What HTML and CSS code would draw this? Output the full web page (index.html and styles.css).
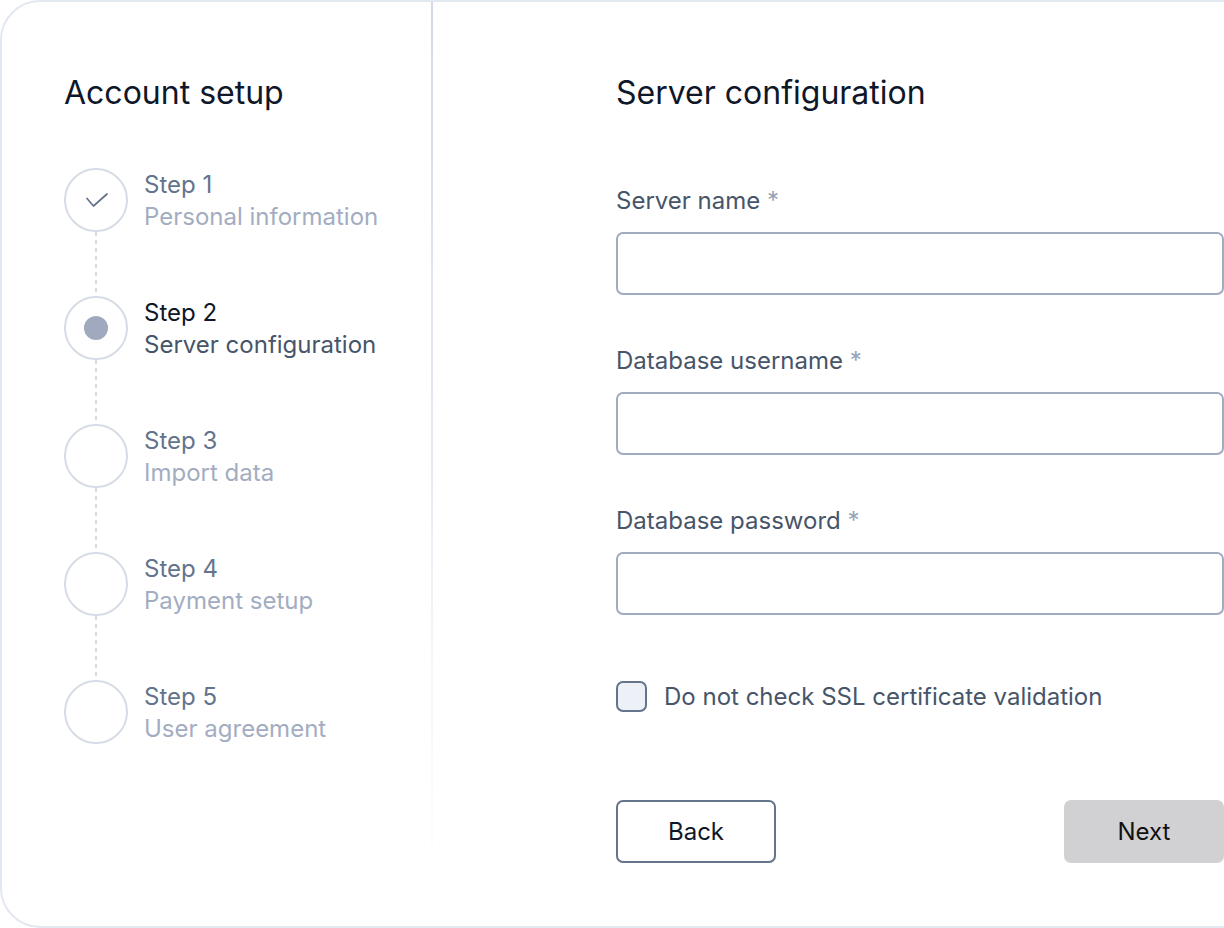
FILE: index.html
```html
<!DOCTYPE html>
<html lang="en">
<head>
<meta charset="utf-8">
<title>Account setup</title>
<link rel="stylesheet" href="styles.css">
</head>
<body>
<div class="card">
  <aside class="sidebar">
    <h1 class="title">Account setup</h1>
    <ol class="steps">
      <li class="step step-done">
        <span class="indicator">
          <svg class="check" width="24" height="24" viewBox="0 0 24 24" aria-hidden="true"><polyline points="2,11.5 8.5,19 22,7" fill="none" stroke="#64748b" stroke-width="1.7" stroke-linecap="round" stroke-linejoin="round"/></svg>
        </span>
        <span class="step-text"><span class="step-num">Step 1</span><span class="step-name">Personal information</span></span>
      </li>
      <li class="connector"><span class="dash"></span></li>
      <li class="step step-active">
        <span class="indicator"><span class="dot"></span></span>
        <span class="step-text"><span class="step-num">Step 2</span><span class="step-name">Server configuration</span></span>
      </li>
      <li class="connector"><span class="dash"></span></li>
      <li class="step">
        <span class="indicator"></span>
        <span class="step-text"><span class="step-num">Step 3</span><span class="step-name">Import data</span></span>
      </li>
      <li class="connector"><span class="dash"></span></li>
      <li class="step">
        <span class="indicator"></span>
        <span class="step-text"><span class="step-num">Step 4</span><span class="step-name">Payment setup</span></span>
      </li>
      <li class="connector"><span class="dash"></span></li>
      <li class="step">
        <span class="indicator"></span>
        <span class="step-text"><span class="step-num">Step 5</span><span class="step-name">User agreement</span></span>
      </li>
    </ol>
  </aside>
  <div class="divider"></div>
  <main class="content">
    <h2 class="title">Server configuration</h2>
    <form class="form">
      <label class="field">
        <span class="label">Server name <span class="req">*</span></span>
        <input class="input" type="text">
      </label>
      <label class="field">
        <span class="label">Database username <span class="req">*</span></span>
        <input class="input" type="text">
      </label>
      <label class="field">
        <span class="label">Database password <span class="req">*</span></span>
        <input class="input" type="password">
      </label>
      <label class="checkbox-row">
        <span class="checkbox"></span>
        <span class="checkbox-label">Do not check SSL certificate validation</span>
      </label>
      <div class="actions">
        <button type="button" class="btn btn-back">Back</button>
        <button type="button" class="btn btn-next">Next</button>
      </div>
    </form>
  </main>
</div>
</body>
</html>
```

FILE: styles.css
```css
* { box-sizing: border-box; }

html, body {
  margin: 0;
  padding: 0;
  background: #ffffff;
  overflow: hidden;
}

body {
  font-family: Inter, "Noto Sans", sans-serif;
  width: 1224px;
  height: 928px;
}

.card {
  display: flex;
  width: 1610px;
  height: 928px;
  border: 2px solid #e2e8f0;
  border-radius: 40px;
  background: #ffffff;
}

.sidebar {
  width: 429px;
  flex: none;
  padding: 71px 0 0 62px;
}

.title {
  margin: 0;
  font-size: 32px;
  line-height: 40px;
  font-weight: 400;
  color: #0f172a;
  letter-spacing: 0;
}

.steps {
  list-style: none;
  margin: 55px 0 0 0;
  padding: 0;
  display: flex;
  flex-direction: column;
}

.step {
  display: flex;
  align-items: center;
  gap: 16px;
  height: 64px;
}

.indicator {
  width: 64px;
  height: 64px;
  flex: none;
  border: 2px solid #d6dce6;
  border-radius: 50%;
  display: flex;
  align-items: center;
  justify-content: center;
}

.check { display: block; margin-left: 1px; margin-top: -2px; }

.dot {
  width: 24px;
  height: 24px;
  border-radius: 50%;
  background: #a0aabe;
}

.step-text {
  display: flex;
  flex-direction: column;
  font-size: 24px;
  line-height: 32px;
  padding-top: 1px;
}

.step-num { color: #64748b; }
.step-name { color: #a3adc1; }

.step-active .step-num { color: #0f172a; }
.step-active .step-name { color: #475569; }

.connector {
  width: 64px;
  height: 64px;
  display: flex;
  justify-content: center;
}

.dash {
  width: 2px;
  height: 64px;
  background: repeating-linear-gradient(to bottom, #d6dce6 0 4px, transparent 4px 8px);
}

.divider {
  width: 2px;
  flex: none;
  background: linear-gradient(to bottom, #d3dae5 0%, #e6eaf1 50%, rgba(240, 242, 247, 0.6) 75%, rgba(255, 255, 255, 0) 97%);
}

.content {
  flex: none;
  width: 800px;
  padding: 71px 0 0 183px;
}

.form {
  margin-top: 71px;
  width: 608px;
  display: flex;
  flex-direction: column;
}

.field {
  display: flex;
  flex-direction: column;
  gap: 15px;
  margin-bottom: 48px;
}

.label {
  font-size: 24px;
  line-height: 32px;
  padding-top: 1px;
  color: #475569;
}

.req { color: #94a3b8; }

.input {
  display: block;
  width: 100%;
  height: 63px;
  margin: 0;
  border: 2px solid #a0abbf;
  border-radius: 7px;
  background: #ffffff;
  font: inherit;
  padding: 0 16px;
  outline: none;
}

.field .input { margin-bottom: 1px; }

.checkbox-row {
  display: flex;
  align-items: center;
  gap: 17px;
  height: 32px;
  margin-top: 16px;
}

.checkbox {
  width: 31px;
  height: 31px;
  flex: none;
  border: 2px solid #64748b;
  border-radius: 7px;
  background: #edf1f7;
}

.checkbox-label {
  font-size: 24px;
  line-height: 32px;
  color: #475569;
  padding-top: 1px;
}

.actions {
  display: flex;
  justify-content: space-between;
  margin-top: 88px;
}

.btn {
  width: 160px;
  height: 63px;
  border-radius: 7px;
  font-family: Inter, "Noto Sans", sans-serif;
  font-size: 24px;
  color: #0f172a;
  cursor: pointer;
}

.btn-back {
  background: #ffffff;
  border: 2px solid #64748b;
}

.btn-next {
  background: #d1d1d4;
  border: none;
  color: #111111;
}
```
